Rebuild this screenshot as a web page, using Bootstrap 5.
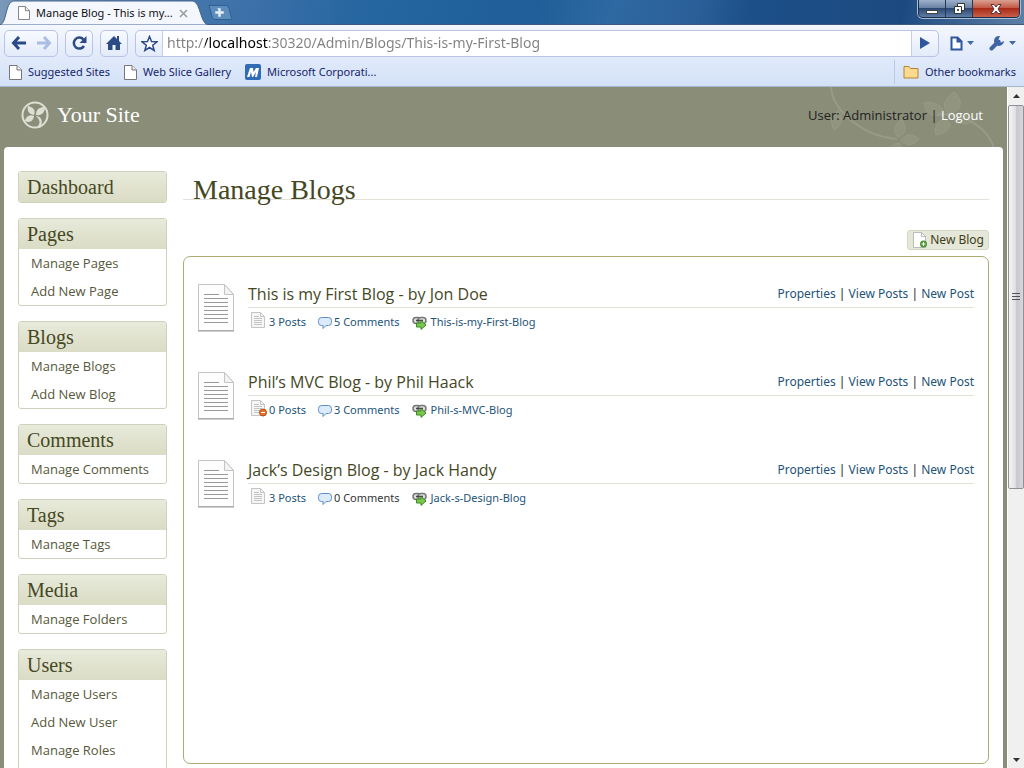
<!DOCTYPE html>
<html lang="en">
<head>
<meta charset="utf-8">
<meta name="viewport" content="width=device-width, initial-scale=1">
<title>Manage Blog - This is my First Blog</title>
<link href="https://cdn.jsdelivr.net/npm/bootstrap@5.3.0/dist/css/bootstrap.min.css" rel="stylesheet">
<style>
:root{--olive:#8a8e79;--ink:#45481f;--edge:#cfd1bd;--link:#1d5479}
body{font-family:"Open Sans","Noto Sans",sans-serif;font-size:13px;line-height:20px;color:#222}
a{text-decoration:none}
button{padding:0;border:0;background:none}
svg{display:block;flex:none}
/* browser frame */
header{font-family:"Noto Sans",sans-serif}
.titlebar{height:25px;background:linear-gradient(100deg,#7a98b8 0,#4a7aab 15%,#3b70a8 25%,#2565a0 36%,#1f5e99 52%,#2f69a2 60%,#2a5f98 68%,#1d4f88 73%,#1c4a80 88%,#5d7fa5 100%);border-bottom:1px solid #3f5a7c}
.tab-item{width:208px;height:25px;font-size:11px;color:#111}
.tab-back{position:absolute;left:0;top:0}
.tab-body{position:relative;padding:3px 0 0 18px;gap:6px}
.win-buttons{border:1px solid #1b2e4c;border-top:0;border-radius:0 0 5px 5px;height:18px;overflow:hidden;margin-right:4px;box-shadow:0 0 0 1px #a9bdd4}
.win-buttons button{width:27px;background:linear-gradient(#9db0ca 0,#6b83a5 45%,#2b4872 50%,#5f7ea5 100%);border-right:1px solid #24395a}
.win-buttons .shut{width:46px;background:linear-gradient(#d9a092 0,#c45a45 45%,#a82a17 50%,#c9604a 100%);border:0}
.toolbar-row{background:linear-gradient(#f4f7fe,#dfe9fa);height:35px;padding:1px 8px 0 4px;gap:7px}
.tool{height:27px;border:1px solid #b9c3e6;border-radius:5px;background:linear-gradient(#f8faff,#e2ebfa);overflow:hidden}
.tool button{width:26px}
.address-slot{background:#fff;border-left:1px solid #c5cdea;border-right:1px solid #c5cdea;min-width:0}
/* the host part of the address is black, the rest is grey */
.address{border:0;width:100%;font-size:14px;padding:0 4px;outline:0;color:transparent;caret-color:#000;background:linear-gradient(90deg,#808080 42px,#000 42px,#000 105px,#808080 105px);-webkit-background-clip:text;background-clip:text}
.bookmarks{background:linear-gradient(#dfe9fa,#d3e1f7);height:27px;border-bottom:1px solid #a9b6cf;font-size:11px;padding:0 8px 2px 9px;gap:14px}
.bookmarks a{color:#16256b;gap:6px}
.split{width:1px;background:#b9c9e4}
.menu-btn{gap:4px}
/* scroll bar */
.scroller{width:17px;background:#f0f0f0;border-left:1px solid #fff;color:#333}
.thumb{height:384px;border:1px solid #8f9094;border-radius:2px;background:linear-gradient(90deg,#f4f4f5,#e2e2e5 45%,#c6c6cc 55%,#d8d8dc)}
/* site */
.site{background:var(--olive);padding:0 4px}
.masthead{height:60px;padding:0 20px 4px 17px}
.vine{position:absolute;right:0;top:0}
.serif{font-family:"Liberation Serif",serif}
.brand{color:#fff;font-size:22px}
.sheet{background:#fff;border-radius:4px 4px 0 0;padding:24px 14px 0;gap:16px}
.side{width:149px;gap:15px;flex:none}
.box{border:1px solid var(--edge);border-radius:3px;overflow:hidden;flex:none}
.box h2{margin:0;height:30px;line-height:31px;padding-left:8px;font-size:20px;font-weight:400;color:var(--ink);background:linear-gradient(#e8eadb,#dadcc5)}
.box a{display:block;height:28px;line-height:28px;padding-left:12px;color:#56583a}
h1{font-size:28px;line-height:28px;height:29px;font-weight:400;color:var(--ink);border-bottom:1px solid #e2e2da;padding:5px 0 0 10px;margin:0 0 30px}
.new-blog{border:1px solid #d5d8c2;border-radius:3px;background:#e5e7d8;color:#3d4020;height:20px;font:12px/18px "Noto Sans",sans-serif;padding:0 4px;gap:2px}
.panel{border:1px solid #abac74;border-radius:7px;margin:6px 0 4px;padding:26px 14px 0 13px}
.entry{height:88px;gap:13px}
.entry h3{font-size:16px;line-height:20px;margin:0;font-weight:400;color:var(--ink)}
.headline{border-bottom:1px solid #e2e2d6;height:25px;font:12px/20px "Noto Sans",sans-serif;padding-bottom:1px}
.entry h3{font-family:"Open Sans",sans-serif}
.entry a,.meta{color:var(--link)}
.meta{gap:12px;padding:4px 0 0 2px;font:11px/20px "Noto Sans",sans-serif}
.meta a{gap:2px}
.meta .web-link{gap:4px}
.meta .none{color:#333}
</style>
</head>
<body class="vh-100 overflow-hidden d-flex flex-column">
<svg width="0" height="0" class="position-absolute">
<defs>
<symbol id="page" viewBox="0 0 13 15"><path d="M.5.5h7.500l4.500 4.500v9.500h-12z" fill="#fff" stroke="#777"/><path d="M8 .5v4.500h4.500" fill="#eee" stroke="#777"/></symbol>
<symbol id="doc" viewBox="0 0 38 49"><path d="M1.500 1.500h26l9 10v36h-35z" fill="#fdfdfd" stroke="#c4c4c4"/><path d="M1 48h36" stroke="#999"/><path d="M27.500 1.500v10h9z" fill="#f4f4f4" stroke="#c4c4c4"/><path d="M7 11.500h15M7 15.500h24M7 19.500h24M7 23.500h24M7 27.500h24M7 31.500h24M7 35.500h24M7 39.500h24" stroke="#999"/></symbol>
<symbol id="post" viewBox="0 0 17 17"><path d="M1.500.5h9l4 4v11h-13z" fill="#f6f6f6" stroke="#c4c4c4"/><path d="M10.500.5v4h4" fill="none" stroke="#c4c4c4"/><path d="M4 4.500h5M4 6.500h8M4 8.500h8M4 10.500h8M4 12.500h8" stroke="#c4c4c4"/></symbol>
<symbol id="talk" viewBox="0 0 14 14"><path d="M3.500 1.500h7q3 0 3 3v2q0 3-3 3h-2.500l-3 3v-3h-1.500q-3 0-3-3v-2q0-3 3-3z" fill="#dcebfb" stroke="#5f8fc6"/></symbol>
<symbol id="chain" viewBox="0 0 15 14"><rect x="1" y="1.500" width="8" height="6" rx="3" fill="#ddd" stroke="#777" stroke-width="1.500"/><rect x="6" y="1.500" width="8" height="6" rx="3" fill="#ddd" stroke="#777" stroke-width="1.500"/><path d="M4 4.500h7" stroke="#444" stroke-width="1.500"/><path d="M4.500 7h4.500v-2.500l5 4.500-5 4.500v-2.500h-4.500z" fill="#7cc74f" stroke="#3a8a22"/></symbol>
</defs></svg>

<header>
<div class="titlebar d-flex align-items-start">
  <div class="tab-item position-relative">
    <svg class="tab-back" width="208" height="25"><path d="M0 25C7 23 5 3 13 1H193C201 3 200 23 208 25z" fill="#f4f7fe" stroke="#44648c"/></svg>
    <div class="tab-body d-flex align-items-center"><svg width="12" height="14"><use href="#page"/></svg><span class="text-nowrap">Manage Blog - This is my...</span>
    <button aria-label="Close tab"><svg width="9" height="9" stroke="#999" stroke-width="1.500"><path d="M1 1l7 7M8 1l-7 7"/></svg></button></div>
  </div>
  <button aria-label="New tab" class="mt-1"><svg width="25" height="17"><path d="M1 1.500h17q2 0 3 3l3 11h-17q-2 0-3-3z" fill="#5d8dbd" stroke="#2f5f93"/><path d="M9.500 4.500h3v3h3v2h-3v3h-2v-3h-3v-2h3v-3z" fill="#e8eef5" stroke="#e8eef5" stroke-width=".5"/></svg></button>
  <div class="win-buttons d-flex ms-auto">
    <button aria-label="Minimize"><svg class="mx-auto" width="12" height="12"><rect x=".5" y="7.500" width="11" height="3" fill="#fff" stroke="#444"/></svg></button>
    <button aria-label="Restore"><svg class="mx-auto" width="13" height="13"><path d="M4.500 1.500h7v7h-7z" fill="#fff" stroke="#333"/><path d="M1.500 4.500h7v7h-7z" fill="#fff" stroke="#333"/><path d="M4 7h2v2h-2z" fill="#555"/></svg></button>
    <button aria-label="Close" class="shut"><svg class="mx-auto" width="14" height="12"><path d="M2 1.500h3l2 2.500 2-2.500h3l-3 4.500 3 4.500h-3l-2-2.500-2 2.500h-3l3-4.500z" fill="#fff" stroke="#533"/></svg></button>
  </div>
</div>
<div class="toolbar-row d-flex align-items-center">
  <div class="tool d-flex"><button aria-label="Back"><svg class="mx-auto" width="15" height="14" fill="none" stroke="#2c4a86" stroke-width="3"><path d="M8 1L2.500 7 8 13M3 7h12"/></svg></button><button aria-label="Forward"><svg class="mx-auto" width="15" height="14" fill="none" stroke="#a9bee2" stroke-width="3"><path d="M7 1l5.500 6L7 13M12 7H0"/></svg></button></div>
  <div class="tool d-flex"><button aria-label="Reload"><svg class="mx-auto" width="17" height="16"><path d="M13 11a5.500 5.500 0 1 1-.5-6.500" fill="none" stroke="#2c4a86" stroke-width="2.500"/><path d="M15.500 1v7h-7z" fill="#2c4a86"/></svg></button></div>
  <div class="tool d-flex"><button aria-label="Home"><svg class="mx-auto" width="16" height="16" fill="#2c4a86"><path d="M8 1L0 9h2v6h4.500v-5h3v5H14V9h2l-3-3V1h-2v3z"/></svg></button></div>
  <div class="tool d-flex flex-fill"><button aria-label="Bookmark this page"><svg class="mx-auto" width="17" height="17"><path d="M8.500 1.500l2 5 5.500.3-4.300 3.400 1.500 5.300-4.700-3-4.700 3 1.500-5.300L1 6.800l5.500-.3z" fill="#fff" stroke="#2c4a86" stroke-width="1.500"/></svg></button>
  <div class="address-slot flex-fill d-flex"><input class="address" aria-label="Address" value="http://localhost:30320/Admin/Blogs/This-is-my-First-Blog"></div>
  <button aria-label="Go"><svg class="mx-auto" width="10" height="12"><path d="M0 0l10 6-10 6z" fill="#2f559f"/></svg></button></div>
  <button aria-label="Page menu" class="menu-btn d-flex align-items-center ms-1"><svg width="13" height="15"><path d="M1.500 1.500h6l4 4v8h-10zM7.500 1.500v4h4" fill="#fff" stroke="#2f559f" stroke-width="2"/></svg><svg width="7" height="4"><path d="M0 0h7l-3.500 4z" fill="#4268a8"/></svg></button>
  <button aria-label="Tools menu" class="menu-btn d-flex align-items-center ms-2"><svg width="16" height="16"><path d="M2.500 13.500l7-7" stroke="#3f63a5" stroke-width="4" stroke-linecap="round"/><path d="M11 1a5 5 0 1 0 4 5l-3 1.500-3-2z" fill="#3f63a5"/></svg><svg width="7" height="4"><path d="M0 0h7l-3.500 4z" fill="#4268a8"/></svg></button>
</div>
<nav class="bookmarks d-flex align-items-center" aria-label="Bookmarks">
  <a href="#" class="d-flex align-items-center"><svg width="13" height="15"><use href="#page"/></svg><span>Suggested Sites</span></a>
  <a href="#" class="d-flex align-items-center"><svg width="13" height="15"><use href="#page"/></svg><span>Web Slice Gallery</span></a>
  <a href="#" class="d-flex align-items-center"><svg width="16" height="16"><rect width="16" height="16" rx="2" fill="#2f6cb5"/><path d="M2 13L5 4h3l.5 4L11 4h3l-2 9h-2l1-5-3 5H7l-1-5-1.500 5z" fill="#fff"/></svg><span>Microsoft Corporati...</span></a>
  <div class="ms-auto d-flex align-self-stretch gap-2"><span class="split"></span>
  <a href="#" class="d-flex align-items-center"><svg width="16" height="14"><path d="M1 3V1.500h5l1.500 2H15v9.500H1z" fill="#fbd98d" stroke="#b58235"/></svg><span>Other bookmarks</span></a></div>
</nav>
</header>

<div class="d-flex flex-fill overflow-hidden">
<div class="site flex-fill d-flex flex-column overflow-hidden">
  <div class="masthead d-flex align-items-center position-relative">
    <svg class="vine" width="175" height="60" fill="#979b87" stroke="#979b87" fill-opacity=".5"><path fill="none" stroke-width="2" d="M3 0c2 26 35 50 66 52M110 27c30 0 50 15 56 34"/><path d="M6 43c-6-12 0-16 4-20 6 8 4 16-4 20zM70 50c-7-8-2-14 4-17 5 8 4 14-4 17zM73 54c4-8 12-8 18-2-6 8-14 6-18 2zM72 56c-8 0-9 4-8 8h10zM120 27c-8-10 0-18 6-22 10 8 8 20-6 22zM116 28c-14 2-18-2-20-12 10-2 20 2 20 12zM126 32c8-4 14-4 20 1-6 6-14 5-20-1zM118 32c8 6 2 14-10 16-2-8 2-16 10-16z"/></svg>
    <div class="d-flex align-items-center gap-2"><svg width="28" height="28" viewBox="0 0 28 28" fill="#dddfd3"><circle cx="14" cy="14" r="12.500" fill="none" stroke="#dddfd3" stroke-width="2"/><path d="M13 14C7 13 6 9 7 5c5 1 8 4 6 9zM15 14c0-6 4-8 9-8 0 5-3 9-9 8zM13 15c-1 6-5 7-9 5 1-5 5-7 9-5zM15 15c5 0 8 5 4 12l-3-1c4-4 3-7-1-11z"/></svg><span class="brand serif">Your Site</span></div>
    <div class="ms-auto position-relative"><span>User: Administrator</span> | <a href="#" class="text-white">Logout</a></div>
  </div>
  <div class="sheet d-flex flex-fill overflow-hidden">
    <nav class="side d-flex flex-column" aria-label="Administration">
      <div class="box"><h2 class="serif">Dashboard</h2></div>
      <div class="box"><h2 class="serif">Pages</h2><a href="#">Manage Pages</a><a href="#">Add New Page</a></div>
      <div class="box"><h2 class="serif">Blogs</h2><a href="#">Manage Blogs</a><a href="#">Add New Blog</a></div>
      <div class="box"><h2 class="serif">Comments</h2><a href="#">Manage Comments</a></div>
      <div class="box"><h2 class="serif">Tags</h2><a href="#">Manage Tags</a></div>
      <div class="box"><h2 class="serif">Media</h2><a href="#">Manage Folders</a></div>
      <div class="box pb-2"><h2 class="serif">Users</h2><a href="#">Manage Users</a><a href="#">Add New User</a><a href="#">Manage Roles</a></div>
    </nav>
    <main class="flex-fill d-flex flex-column">
      <h1 class="serif">Manage Blogs</h1>
      <button class="new-blog d-flex align-items-center align-self-end"><svg width="16" height="16"><path d="M1.500.5h8l4 4v11h-12z" fill="#fff" stroke="#bbb"/><path d="M9.500.5v4h4" fill="none" stroke="#bbb"/><circle cx="11.500" cy="12" r="3.500" fill="#4c9434"/><path d="M11.500 10v4M9.500 12h4" stroke="#fff"/></svg><span>New Blog</span></button>
      <div class="panel flex-fill">
        <article class="entry d-flex"><svg width="38" height="49"><use href="#doc"/></svg>
          <div class="flex-fill"><div class="headline d-flex align-items-center"><h3>This is my First Blog - by Jon Doe</h3><div class="ms-auto"><a href="#">Properties</a> | <a href="#">View Posts</a> | <a href="#">New Post</a></div></div>
          <div class="meta d-flex"><a href="#" class="d-flex"><svg width="17" height="17"><use href="#post"/></svg>3 Posts</a><a href="#" class="d-flex"><svg class="mt-1" width="14" height="14"><use href="#talk"/></svg>5 Comments</a><a href="#" class="web-link d-flex"><svg class="mt-1" width="15" height="14"><use href="#chain"/></svg>This-is-my-First-Blog</a></div></div></article>
        <article class="entry d-flex"><svg width="38" height="49"><use href="#doc"/></svg>
          <div class="flex-fill"><div class="headline d-flex align-items-center"><h3>Phil’s MVC Blog - by Phil Haack</h3><div class="ms-auto"><a href="#">Properties</a> | <a href="#">View Posts</a> | <a href="#">New Post</a></div></div>
          <div class="meta d-flex"><a href="#" class="d-flex"><svg width="17" height="17"><use href="#post"/><circle cx="13" cy="12.500" r="3.500" fill="#e2702a" stroke="#b84b12"/><path d="M11 12.500h4" stroke="#fff"/></svg>0 Posts</a><a href="#" class="d-flex"><svg class="mt-1" width="14" height="14"><use href="#talk"/></svg>3 Comments</a><a href="#" class="web-link d-flex"><svg class="mt-1" width="15" height="14"><use href="#chain"/></svg>Phil-s-MVC-Blog</a></div></div></article>
        <article class="entry d-flex"><svg width="38" height="49"><use href="#doc"/></svg>
          <div class="flex-fill"><div class="headline d-flex align-items-center"><h3>Jack’s Design Blog - by Jack Handy</h3><div class="ms-auto"><a href="#">Properties</a> | <a href="#">View Posts</a> | <a href="#">New Post</a></div></div>
          <div class="meta d-flex"><a href="#" class="d-flex"><svg width="17" height="17"><use href="#post"/></svg>3 Posts</a><span class="none d-flex"><svg class="mt-1" width="16" height="14" viewBox="0 0 16 14"><use href="#talk" width="14" height="14"/></svg>0 Comments</span><a href="#" class="web-link d-flex"><svg class="mt-1" width="15" height="14"><use href="#chain"/></svg>Jack-s-Design-Blog</a></div></div></article>
      </div>
    </main>
  </div>
</div>
<div class="scroller d-flex flex-column" aria-hidden="true">
  <svg width="16" height="18"><path d="M5 11h7L8.500 7z" fill="#333"/></svg>
  <div class="thumb d-flex align-items-center justify-content-center"><svg width="8" height="8" stroke="#555"><path d="M0 .5h8M0 3.500h8M0 6.500h8"/></svg></div>
  <svg class="mt-auto" width="16" height="18"><path d="M5 8h7l-3.500 4z" fill="#333"/></svg>
</div>
</div>
<script src="https://cdn.jsdelivr.net/npm/bootstrap@5.3.0/dist/js/bootstrap.bundle.min.js"></script>
</body>
</html>
